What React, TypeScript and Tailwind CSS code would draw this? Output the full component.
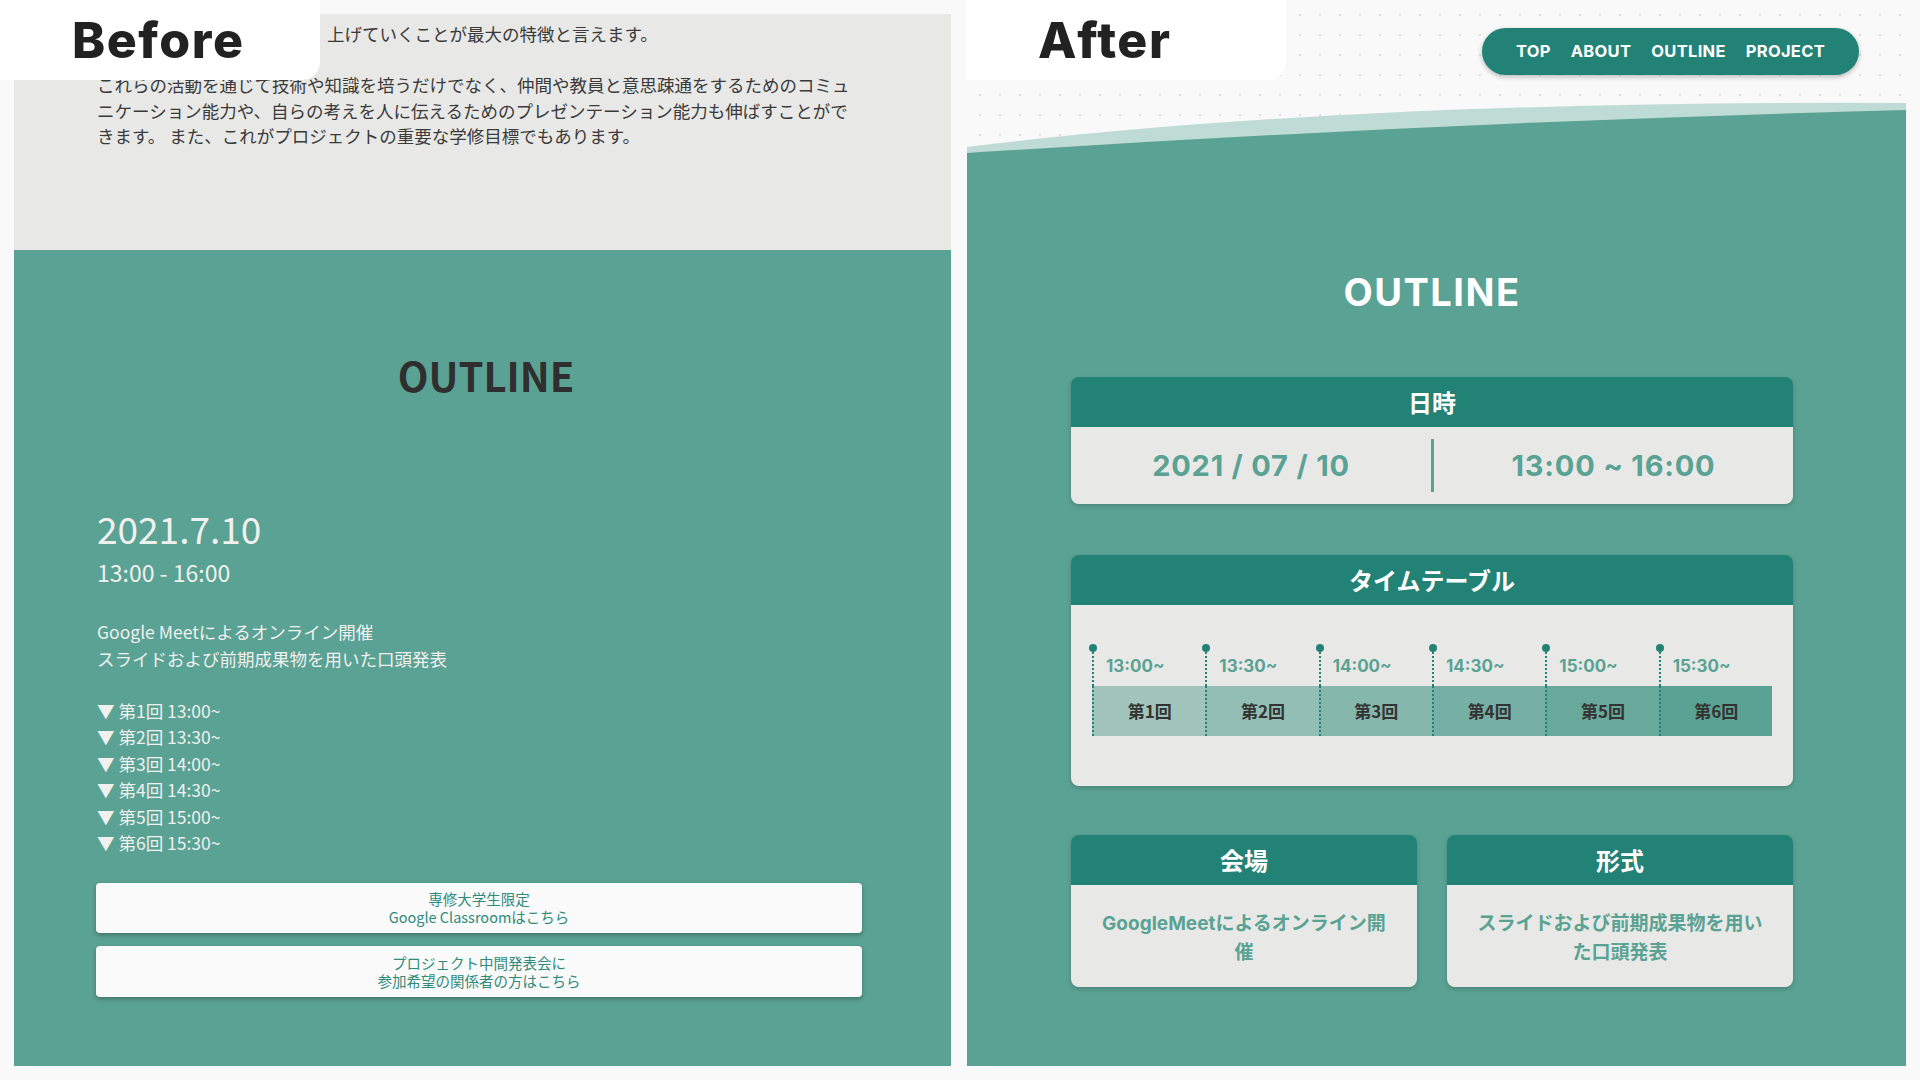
import React from 'react';

const JP = "[font-family:'Noto_Sans_CJK_JP','Noto_Sans',sans-serif]";
const MONT = "[font-family:Inter,'Noto_Sans_CJK_JP',sans-serif]";

const slots = [
  { time: '13:00~', label: '第1回', bg: 'bg-[#a1c5bd]' },
  { time: '13:30~', label: '第2回', bg: 'bg-[#93beb5]' },
  { time: '14:00~', label: '第3回', bg: 'bg-[#85b7ac]' },
  { time: '14:30~', label: '第4回', bg: 'bg-[#76b0a4]' },
  { time: '15:00~', label: '第5回', bg: 'bg-[#68a99b]' },
  { time: '15:30~', label: '第6回', bg: 'bg-[#5aa293]' },
];

const rounds = ['第1回 13:00~', '第2回 13:30~', '第3回 14:00~', '第4回 14:30~', '第5回 15:00~', '第6回 15:30~'];

const CornerLabel: React.FC<{ text: string; className: string }> = ({ text, className }) => (
  <div className={`absolute top-0 w-[320px] h-[80px] bg-white rounded-br-[18px] flex items-center pl-[72px] ${className}`}>
    <span className={`${MONT} text-[50px] leading-none font-extrabold text-[#222] tracking-[1.5px]`}>{text}</span>
  </div>
);

const BeforePanel: React.FC = () => (
  <div className={`w-[937px] shrink-0 flex flex-col overflow-hidden ${JP}`}>
    {/* about section tail (start of the line sits under the label) */}
    <div className="h-[236px] shrink-0 bg-[#e8e9e7] pl-[83px] pt-[7px] text-[17.5px] leading-[25.6px] text-[#3a3a3a]">
      <div className="w-[760px]">
        <p className="pl-[230px]">上げていくことが最大の特徴と言えます。</p>
        <p className="mt-[25.6px]">
          これらの活動を通じて技術や知識を培うだけでなく、仲間や教員と意思疎通をするためのコミュニケーション能力や、自らの考えを人に伝えるためのプレゼンテーション能力も伸ばすことができます。 また、これがプロジェクトの重要な学修目標でもあります。
        </p>
      </div>
    </div>

    {/* outline */}
    <div className="flex-1 bg-[#5aa293] pl-[83px] pr-[76px] text-[#f0f0ee]">
      <h2 className="mt-[105px] text-center text-[40px] leading-[40px] font-bold text-[#2f2f2f]">OUTLINE</h2>
      <p className="mt-[106px] text-[37px] leading-[54px]">2021.7.10</p>
      <p className="text-[23px] leading-[34px]">13:00 - 16:00</p>
      <div className="mt-[30px] text-[17.5px] leading-[26.5px]">
        <p>Google Meetによるオンライン開催</p>
        <p>スライドおよび前期成果物を用いた口頭発表</p>
      </div>
      <ul className="mt-[26px] text-[17.5px] leading-[26.4px]">
        {rounds.map((r) => (
          <li key={r}>▼ {r}</li>
        ))}
      </ul>
      <div className="mt-[27px] w-[766px] -ml-[1px] flex flex-col gap-[13px]">
        <button className="h-[50px] rounded-[4px] bg-[#fafafa] shadow-[0_2px_4px_rgba(0,0,0,0.3)] text-[14.5px] leading-[18px] text-[#2f8a7b]">
          専修大学生限定<br />Google Classroomはこちら
        </button>
        <button className="h-[51px] rounded-[4px] bg-[#fafafa] shadow-[0_2px_4px_rgba(0,0,0,0.3)] text-[14.5px] leading-[18px] text-[#2f8a7b]">
          プロジェクト中間発表会に<br />参加希望の関係者の方はこちら
        </button>
      </div>
    </div>
  </div>
);

const Card: React.FC<{ title: string; className?: string; children: React.ReactNode }> = ({ title, className = '', children }) => (
  <div className={`rounded-[8px] overflow-hidden shadow-[0_2px_5px_rgba(0,0,0,0.18)] ${className}`}>
    <div className={`h-[50px] bg-[#238276] flex items-center justify-center text-white font-bold text-[24px] ${JP}`}>{title}</div>
    <div className="bg-[#e8e9e7]">{children}</div>
  </div>
);

const AfterPanel: React.FC = () => (
  <div className="w-[939px] shrink-0 flex flex-col bg-[#f9f9f9] bg-[radial-gradient(circle,#dedede_1px,transparent_1.6px)] [background-size:20px_20px] [background-position:3px_11px]">
    {/* header */}
    <div className="h-[86px] shrink-0 flex justify-end pt-[14px] pr-[47px]">
      <nav className={`h-[47px] rounded-full bg-[#238276] shadow-[0_2px_5px_rgba(0,0,0,0.25)] flex items-center gap-[20px] px-[34px] text-white font-bold text-[16.5px] tracking-[0.3px] ${MONT}`}>
        <span>TOP</span>
        <span>ABOUT</span>
        <span>OUTLINE</span>
        <span>PROJECT</span>
      </nav>
    </div>

    {/* wave */}
    <svg className="block w-[939px] h-[56px] shrink-0" viewBox="0 0 939 56" preserveAspectRatio="none">
      <path d="M0,47 Q380,0 939,3 L939,56 L0,56 Z" fill="#bedcd5" />
      <path d="M0,53 Q480,22 939,10 L939,56 L0,56 Z" fill="#5aa293" />
    </svg>

    {/* outline */}
    <section className="flex-1 bg-[#5aa293] pl-[104px] flex flex-col">
      <h2 className={`mt-[117px] w-[722px] text-center text-[38px] leading-[38px] font-bold text-white tracking-[1.5px] ${MONT}`}>OUTLINE</h2>

      <Card title="日時" className="mt-[66px] w-[722px]">
        <div className={`h-[77px] flex items-center text-[#5aa293] font-bold text-[29px] tracking-[0.8px] ${MONT}`}>
          <div className="w-[360px] text-center">2021 / 07 / 10</div>
          <div className="w-[3px] h-[53px] bg-[#5aa293]" />
          <div className="flex-1 text-center">13:00 ~ 16:00</div>
        </div>
      </Card>

      <Card title="タイムテーブル" className="mt-[51px] w-[722px]">
        <div className="h-[181px] pt-[43px] px-[21px] flex">
          {slots.map((s) => (
            <div key={s.time} className="flex-1 flex flex-col">
              <div className="relative h-[38px] border-l-2 border-dotted border-[#238276] pl-[12px] flex items-center">
                <span className="absolute left-[-5px] top-[-4px] w-[8px] h-[8px] rounded-full bg-[#238276]" />
                <span className={`text-[17px] font-bold text-[#5aa293] ${MONT}`}>{s.time}</span>
              </div>
              <div className={`h-[50px] border-l-2 border-dotted border-[#238276] flex items-center justify-center text-[17px] font-bold text-[#333] ${JP} ${s.bg}`}>
                {s.label}
              </div>
            </div>
          ))}
        </div>
      </Card>

      <div className="mt-[49px] flex gap-[30px]">
        <Card title="会場" className="w-[346px]">
          <div className={`h-[102px] flex items-center justify-center px-[22px] pt-[3px] text-center text-[19px] leading-[29px] font-bold text-[#5aa293] ${MONT}`}>
            GoogleMeetによるオンライン開催
          </div>
        </Card>
        <Card title="形式" className="w-[346px]">
          <div className={`h-[102px] flex items-center justify-center px-[22px] pt-[3px] text-center text-[19px] leading-[29px] font-bold text-[#5aa293] ${MONT}`}>
            スライドおよび前期成果物を用いた口頭発表
          </div>
        </Card>
      </div>
    </section>
  </div>
);

export default function App() {
  return (
    <div className="relative w-[1920px] h-[1080px] overflow-hidden bg-[#f9f9f9] flex gap-[16px] p-[14px]">
      <BeforePanel />
      <AfterPanel />
      <CornerLabel text="Before" className="left-0" />
      <CornerLabel text="After" className="left-[966px]" />
    </div>
  );
}
